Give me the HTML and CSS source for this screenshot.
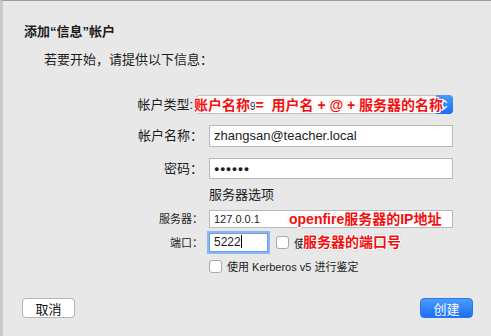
FILE: index.html
```html
<!DOCTYPE html>
<html lang="zh-CN">
<head>
    <meta charset="UTF-8">
    <title>添加“信息”帐户</title>
    <link rel="stylesheet" href="styles.css">
</head>
<body>
    <div class="window">
        <div class="title">添加“信息”帐户</div>
        <div class="intro">若要开始，请提供以下信息：</div>

        <div class="row row-type">
            <label class="label label-type">帐户类型:</label>
            <div class="popup">
                <span class="popup-arrows">
                    <svg width="7" height="11" viewBox="0 0 7 11"><path d="M1 4 L3.5 1.5 L6 4 M1 7 L3.5 9.5 L6 7" fill="none" stroke="#fff" stroke-width="1.3"/></svg>
                </span>
                <span class="note note-type">账户名称<span class="under">9</span>= &nbsp;用户名 + @ + 服务器的名称</span>
            </div>
        </div>

        <div class="row row-name">
            <label class="label">帐户名称：</label>
            <div class="field">zhangsan@teacher.local</div>
        </div>

        <div class="row row-pass">
            <label class="label">密码：</label>
            <div class="field dots">●●●●●●</div>
        </div>

        <div class="row row-section">
            <span></span>
            <div class="section">服务器选项</div>
        </div>

        <div class="row row-server small">
            <label class="label">服务器：</label>
            <div class="field field-small">127.0.0.1
                <span class="note note-ip">openfire服务器的IP地址</span>
            </div>
        </div>

        <div class="row row-port small">
            <label class="label">端口：</label>
            <div class="port-line">
                <div class="field port">5222<span class="caret"></span></div>
                <span class="check"></span>
                <span class="check-text">使用 SSL</span>
                <span class="note note-port">服务器的端口号</span>
            </div>
        </div>

        <div class="row row-kerb small">
            <span></span>
            <div class="port-line">
                <span class="check"></span>
                <span class="check-text">使用 Kerberos v5 进行鉴定</span>
            </div>
        </div>

        <div class="buttons">
            <button class="btn">取消</button>
            <button class="btn btn-primary">创建</button>
        </div>
    </div>
</body>
</html>
```

FILE: styles.css
```css
body { margin: 0; font-family: "Liberation Sans", "Noto Sans CJK SC", sans-serif; font-size: 13px; color: #1c1c1c; background: #e8e8e8; }
.window { width: 491px; height: 336px; box-sizing: border-box; border-top: 1px solid #9d9d9d; border-left: 3px solid #c9c9c9; background: #e8e8e8; padding-top: 23px; display: flex; flex-direction: column; }
.title { font-weight: bold; line-height: 16px; padding-left: 21px; }
.intro { line-height: 16px; padding-left: 41px; margin-top: 12px; }

.row { display: grid; grid-template-columns: 200px 244px; column-gap: 6px; align-items: center; }
.label { text-align: right; line-height: 16px; }
.small { font-size: 11px; }

.row-type { margin-top: 27px; height: 19px; }
.label-type { padding-right: 10px; }
.popup { position: relative; margin-left: -14px; width: 258px; height: 19px; box-sizing: border-box; background: #fff; border: 1px solid #c2c2c2; border-radius: 4px; }
.popup-arrows { position: absolute; right: -1px; top: -1px; width: 17px; height: 19px; border-radius: 0 4px 4px 0; background: linear-gradient(#4a9bfa, #1a6ef4); display: flex; align-items: center; justify-content: center; }

.field { position: relative; height: 22px; box-sizing: border-box; background: #fff; border: 1px solid #b9b9b9; padding-left: 4px; line-height: 20px; font-size: 13px; }
.field-small { height: 18px; line-height: 16px; font-size: 11px; }
.dots { font-size: 9px; letter-spacing: 0.5px; }

.row-name { margin-top: 11px; }
.row-pass { margin-top: 11px; height: 21px; }
.row-pass .field { height: 21px; }
.row-section { margin-top: 8px; height: 16px; }
.section { line-height: 16px; }
.row-server { margin-top: 7px; height: 18px; }
.row-port { margin-top: 5px; height: 19px; }
.row-kerb { margin-top: 6px; height: 13px; }

.port-line { position: relative; display: flex; align-items: center; }
.port { width: 59px; height: 19px; line-height: 17px; font-size: 12px; box-shadow: 0 0 0 2px #8ab6f1; border-color: #6a9fe6; }
.caret { display: inline-block; width: 1px; height: 13px; background: #000; vertical-align: -2px; }
.check { width: 13px; height: 13px; box-sizing: border-box; background: #fff; border: 1px solid #a8a8a8; border-radius: 3px; }
.port + .check { margin-left: 8px; }
.check-text { margin-left: 5px; }

.note { position: absolute; color: #f20f0f; font-weight: bold; font-size: 14px; white-space: nowrap; line-height: 16px; text-shadow: 1px 0 0 #fff, -1px 0 0 #fff, 0 1px 0 #fff, 0 -1px 0 #fff, 1px 1px 0 #fff, -1px -1px 0 #fff, 1px -1px 0 #fff, -1px 1px 0 #fff, 0 0 3px #999; }
.note-type { left: -2px; top: 1px; }
.under { color: #222; font-weight: normal; font-size: 10px; }
.note-ip { left: 79px; top: 0; }
.note-port { left: 94px; top: 1px; }

.buttons { margin-top: auto; padding: 0 18px 18px 19px; display: flex; justify-content: space-between; }
.btn { width: 53px; height: 20px; box-sizing: border-box; border: 1px solid #b4b4b4; border-radius: 4px; background: #fff; font-family: "Liberation Sans", "Noto Sans CJK SC", sans-serif; font-size: 13px; color: #111; padding: 0; }
.btn-primary { background: linear-gradient(#4d9bfb, #1b6ff5); border-color: #2a78ee; color: #fff; }
```
